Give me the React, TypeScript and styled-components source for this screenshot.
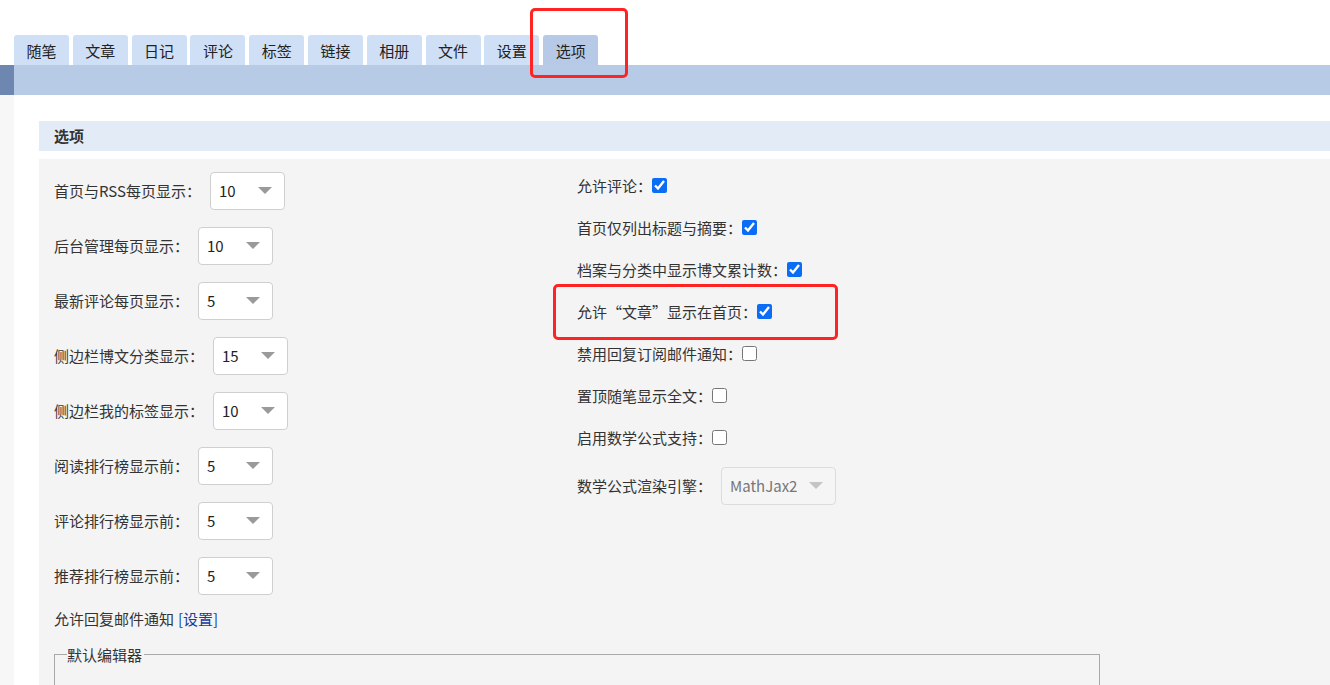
import React from 'react';
import styled, { createGlobalStyle } from 'styled-components';

const GlobalStyle = createGlobalStyle`
  html, body {
    margin: 0;
    padding: 0;
    background: #fff;
    font-family: "Segoe UI", "Noto Sans CJK SC", "Noto Sans", sans-serif;
    color: #333;
    font-size: 15px;
    overflow: hidden;
  }
`;

const tabs = ['随笔', '文章', '日记', '评论', '标签', '链接', '相册', '文件', '设置', '选项'];

const selectRows = [
  { label: '首页与RSS每页显示：', value: '10' },
  { label: '后台管理每页显示：', value: '10' },
  { label: '最新评论每页显示：', value: '5' },
  { label: '侧边栏博文分类显示：', value: '15' },
  { label: '侧边栏我的标签显示：', value: '10' },
  { label: '阅读排行榜显示前：', value: '5' },
  { label: '评论排行榜显示前：', value: '5' },
  { label: '推荐排行榜显示前：', value: '5' },
];

const checkRows = [
  { label: '允许评论：', checked: true },
  { label: '首页仅列出标题与摘要：', checked: true },
  { label: '档案与分类中显示博文累计数：', checked: true },
  { label: '允许“文章”显示在首页：', checked: true },
  { label: '禁用回复订阅邮件通知：', checked: false },
  { label: '置顶随笔显示全文：', checked: false },
  { label: '启用数学公式支持：', checked: false },
];

const App = () => {
  return (
    <Page>
      <GlobalStyle />
      <TabBar>
        {tabs.map((t) => (
          <Tab key={t} active={t === '选项'}>
            {t}
          </Tab>
        ))}
      </TabBar>
      <BlueBar>
        <BarEdge />
      </BlueBar>
      <Body>
        <SideStrip />
        <Main>
          <SectionHeader>选项</SectionHeader>
          <Panel>
            <LeftColumn>
              {selectRows.map((r) => (
                <SelectRow key={r.label}>
                  <Label>{r.label}</Label>
                  <SelectBox>
                    <span>{r.value}</span>
                    <Caret />
                  </SelectBox>
                </SelectRow>
              ))}
              <TextRow>
                允许回复邮件通知 <LinkText>[设置]</LinkText>
              </TextRow>
              <EditorSet>
                <Legend>默认编辑器</Legend>
              </EditorSet>
            </LeftColumn>
            <RightColumn>
              {checkRows.map((r) => (
                <CheckRow key={r.label}>
                  <Label>{r.label}</Label>
                  <Check type="checkbox" defaultChecked={r.checked} />
                </CheckRow>
              ))}
              <SelectRow>
                <Label>数学公式渲染引擎：</Label>
                <SelectBox disabled wide>
                  <span>MathJax2</span>
                  <Caret disabled />
                </SelectBox>
              </SelectRow>
            </RightColumn>
          </Panel>
        </Main>
      </Body>
      <Mark style={{ left: 530, top: 8, width: 98, height: 70 }} />
      <Mark style={{ left: 553, top: 284, width: 285, height: 56 }} />
    </Page>
  );
};

const Page = styled.div`
  position: relative;
  width: 1330px;
  height: 685px;
  overflow: hidden;
`;

const TabBar = styled.div`
  display: flex;
  gap: 3.8px;
  padding: 35px 0 0 14px;
  height: 30px;
  box-sizing: content-box;
`;

const Tab = styled.div<{ active?: boolean }>`
  width: 55px;
  height: 30px;
  display: flex;
  align-items: center;
  justify-content: center;
  background: ${(p) => (p.active ? '#b6c9e6' : '#cfdff5')};
  border-radius: 3px 3px 0 0;
  color: #222;
  font-size: 15px;
`;

const BlueBar = styled.div`
  height: 30px;
  background: #b7cae6;
  display: flex;
`;

const BarEdge = styled.div`
  width: 14px;
  background: #6d87b1;
`;

const Body = styled.div`
  display: flex;
  height: 590px;
`;

const SideStrip = styled.div`
  width: 14px;
  background: #f7f7f7;
`;

const Main = styled.div`
  flex: 1;
  padding: 26px 0 0 25px;
  display: flex;
  flex-direction: column;
  gap: 8px;
`;

const SectionHeader = styled.div`
  height: 30px;
  line-height: 30px;
  background: #e3ebf6;
  padding-left: 15px;
  font-weight: bold;
  font-size: 15px;
  color: #333;
`;

const Panel = styled.div`
  flex: 1;
  background: #f4f4f4;
  display: grid;
  grid-template-columns: 523px auto;
  padding: 4px 0 0 15px;
`;

const LeftColumn = styled.div`
  display: flex;
  flex-direction: column;
`;

const RightColumn = styled.div`
  display: flex;
  flex-direction: column;
  padding-top: 1px;
`;

const SelectRow = styled.div`
  height: 55px;
  display: flex;
  align-items: center;
  gap: 9px;
`;

const CheckRow = styled.div`
  height: 42px;
  display: flex;
  align-items: center;
`;

const Label = styled.span`
  font-size: 15px;
  color: #333;
  white-space: nowrap;
`;

const SelectBox = styled.div<{ disabled?: boolean; wide?: boolean }>`
  width: ${(p) => (p.wide ? '115px' : '75px')};
  height: 38px;
  box-sizing: border-box;
  display: flex;
  align-items: center;
  justify-content: space-between;
  padding: 0 12px 0 8px;
  background: ${(p) => (p.disabled ? '#f5f5f5' : '#fff')};
  border: 1px solid ${(p) => (p.disabled ? '#dcdcdc' : '#cfcfcf')};
  border-radius: 4px;
  color: ${(p) => (p.disabled ? '#777' : '#222')};
  font-size: 15px;
`;

const Caret = styled.i<{ disabled?: boolean }>`
  width: 0;
  height: 0;
  border-left: 7px solid transparent;
  border-right: 7px solid transparent;
  border-top: 7px solid ${(p) => (p.disabled ? '#c4c4c4' : '#9a9a9a')};
`;

const Check = styled.input`
  width: 15px;
  height: 15px;
  margin: 0;
  accent-color: #0b6cf5;
`;

const TextRow = styled.div`
  height: 30px;
  display: flex;
  align-items: center;
  gap: 4px;
  font-size: 15px;
`;

const LinkText = styled.span`
  color: #163c9c;
`;

const EditorSet = styled.fieldset`
  margin: 11px 0 0 0;
  width: 1046px;
  height: 80px;
  border: 1px solid #a9a9a9;
  padding: 0 12px;
  box-sizing: border-box;
`;

const Legend = styled.legend`
  padding: 0 2px 0 0;
  font-size: 15px;
  color: #333;
`;

const Mark = styled.div`
  position: absolute;
  border: 3px solid #ff2424;
  border-radius: 5px;
  box-sizing: border-box;
  pointer-events: none;
`;

export default App;
